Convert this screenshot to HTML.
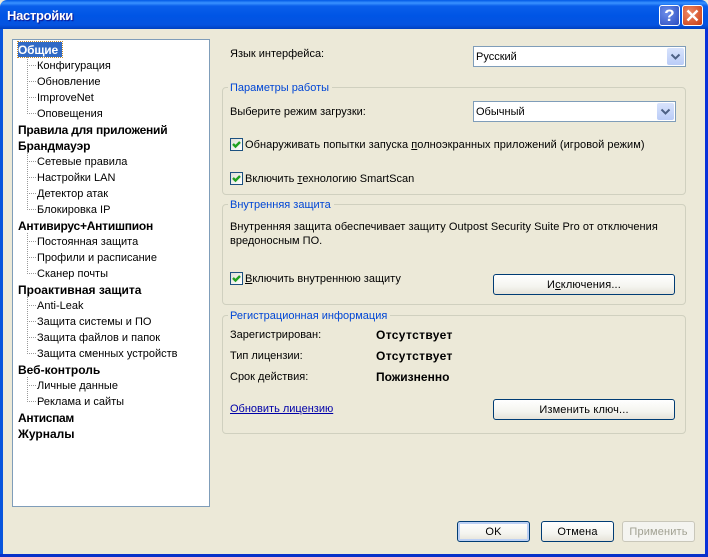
<!DOCTYPE html>
<html><head><meta charset="utf-8"><style>
html,body{margin:0;padding:0;width:708px;height:557px;overflow:hidden;background:#ECE9D8}
*{box-sizing:border-box}
body{position:relative;font:11px/13px "Liberation Sans",sans-serif;color:#000}
.a,.t,.b,.h,.v,.g,.s{position:absolute}
.t{white-space:nowrap;margin-top:1px}
.n{left:37px}
.m{left:18px;font-weight:bold;font-size:12px}
.k{left:376px;font-weight:bold;font-size:12px}
.h{height:1px;width:9px;left:27px;background-image:linear-gradient(90deg,#999 50%,transparent 50%);background-size:2px 1px}
.v{width:1px;left:27px;background-image:linear-gradient(#999 50%,transparent 50%);background-size:1px 2px}
.g{left:222px;width:464px;border:1px solid #D0D0BF;border-radius:4px}
.l{color:#0046D5;background:#ECE9D8;padding:0 3px 0 2px}
.b{height:21px;border:1px solid #003C74;border-radius:3px;background:linear-gradient(#fff,#f4f4ef 60%,#e6e3d8);text-align:center;line-height:20px;letter-spacing:.15px}
.s{height:21px;border:1px solid #7F9DB9;background:#fff;line-height:21px;padding-left:2px}
.s i{position:absolute;right:1px;top:1px;width:17px;height:17px;border-radius:2px;background:linear-gradient(#D8E3FC,#BACCF7)}
.c{position:absolute;width:13px;height:13px;border:1px solid #1C5180;background:linear-gradient(135deg,#E0E0D8,#fff)}
.d{letter-spacing:.05px}
u{text-decoration:underline}
</style></head><body>
<div class="a" style="left:0;top:0;width:708px;height:29px;background:linear-gradient(#0058E6 0,#3A93FF 3px,#0A5FEA 6px,#0055E5 16px,#0553E0 25px,#0040C0 29px);border-radius:7px 7px 0 0"></div>
<div class="a" style="left:0;top:29px;width:3px;height:528px;background:#0855DD"></div>
<div class="a" style="right:0;top:29px;width:3px;height:528px;background:#0831D9"></div>
<div class="a" style="left:0;top:554px;width:708px;height:3px;background:#0831C9"></div>
<div class="t" style="left:7px;top:8px;margin:0;color:#fff;font:bold 13px/16px 'Liberation Sans',sans-serif;letter-spacing:-.3px;text-shadow:1px 1px 1px #0F1089">Настройки</div>
<div class="a" style="left:659px;top:5px;width:21px;height:21px;border:1px solid #fff;border-radius:3px;background:radial-gradient(circle at 35% 35%,#6E8FEA,#2A4CC0);color:#fff;font:bold 17px/19px 'Liberation Sans',sans-serif;text-align:center">?</div>
<div class="a" style="left:682px;top:5px;width:21px;height:21px;border:1px solid #fff;border-radius:3px;background:radial-gradient(circle at 35% 35%,#EE8A66,#C93A10)"><svg width="19" height="19" style="display:block"><path d="M4.5 4.5L14.5 14.5M14.5 4.5L4.5 14.5" stroke="#fff" stroke-width="2.4"/></svg></div>

<div class="a" style="left:12px;top:39px;width:198px;height:468px;border:1px solid #7F9DB9;background:#fff"></div>
<div class="a" style="left:18px;top:42px;width:44px;height:15px;background:#316AC5;outline:1px dotted #C08A30"></div>
<div class="v" style="top:57px;height:56px"></div>
<div class="h" style="top:65px"></div><div class="h" style="top:81px"></div><div class="h" style="top:97px"></div><div class="h" style="top:113px"></div>
<div class="v" style="top:153px;height:56px"></div>
<div class="h" style="top:161px"></div><div class="h" style="top:177px"></div><div class="h" style="top:193px"></div><div class="h" style="top:209px"></div>
<div class="v" style="top:233px;height:40px"></div>
<div class="h" style="top:241px"></div><div class="h" style="top:257px"></div><div class="h" style="top:273px"></div>
<div class="v" style="top:297px;height:56px"></div>
<div class="h" style="top:305px"></div><div class="h" style="top:321px"></div><div class="h" style="top:337px"></div><div class="h" style="top:353px"></div>
<div class="v" style="top:377px;height:24px"></div>
<div class="h" style="top:385px"></div><div class="h" style="top:401px"></div>

<div class="t m" style="top:43px;color:#fff;letter-spacing:-.2px">Общие</div>
<div class="t n" style="top:59px">Конфигурация</div>
<div class="t n" style="top:75px">Обновление</div>
<div class="t n" style="top:91px">ImproveNet</div>
<div class="t n" style="top:107px">Оповещения</div>
<div class="t m" style="top:123px;letter-spacing:-.22px">Правила для приложений</div>
<div class="t m" style="top:139px;letter-spacing:-.1px">Брандмауэр</div>
<div class="t n" style="top:155px">Сетевые правила</div>
<div class="t n" style="top:171px">Настройки LAN</div>
<div class="t n" style="top:187px">Детектор атак</div>
<div class="t n" style="top:203px">Блокировка IP</div>
<div class="t m" style="top:219px;letter-spacing:-.24px">Антивирус+Антишпион</div>
<div class="t n" style="top:235px">Постоянная защита</div>
<div class="t n" style="top:251px">Профили и расписание</div>
<div class="t n" style="top:267px">Сканер почты</div>
<div class="t m" style="top:283px">Проактивная защита</div>
<div class="t n" style="top:299px">Anti-Leak</div>
<div class="t n" style="top:315px">Защита системы и ПО</div>
<div class="t n" style="top:331px">Защита файлов и папок</div>
<div class="t n" style="top:347px">Защита сменных устройств</div>
<div class="t m" style="top:363px">Веб-контроль</div>
<div class="t n" style="top:379px">Личные данные</div>
<div class="t n" style="top:395px">Реклама и сайты</div>
<div class="t m" style="top:411px;letter-spacing:-.35px">Антиспам</div>
<div class="t m" style="top:427px">Журналы</div>

<div class="t" style="left:230px;top:47px">Язык интерфейса:</div>
<div class="s" style="left:473px;top:46px;width:213px">Русский<i><svg width="17" height="17" style="display:block"><path d="M4.5 6.5L8.5 10.5L12.5 6.5" fill="none" stroke="#4D6185" stroke-width="2"/></svg></i></div>

<div class="g" style="top:87px;height:108px"></div>
<div class="t l" style="left:228px;top:81px">Параметры работы</div>
<div class="t" style="left:230px;top:105px">Выберите режим загрузки:</div>
<div class="s" style="left:473px;top:101px;width:203px">Обычный<i><svg width="17" height="17" style="display:block"><path d="M4.5 6.5L8.5 10.5L12.5 6.5" fill="none" stroke="#4D6185" stroke-width="2"/></svg></i></div>
<div class="c" style="left:230px;top:138px"><svg width="11" height="11" style="display:block"><path d="M2 5L4.5 7.5L9 3" fill="none" stroke="#21A121" stroke-width="2.4"/></svg></div>
<div class="t d" style="left:245px;top:138px">Обнаруживать попытки запуска <u>п</u>олноэкранных приложений (игровой режим)</div>
<div class="c" style="left:230px;top:172px"><svg width="11" height="11" style="display:block"><path d="M2 5L4.5 7.5L9 3" fill="none" stroke="#21A121" stroke-width="2.4"/></svg></div>
<div class="t" style="left:245px;top:172px">Включить <u>т</u>ехнологию SmartScan</div>

<div class="g" style="top:204px;height:101px"></div>
<div class="t l" style="left:228px;top:198px">Внутренняя защита</div>
<div class="t d" style="left:230px;top:220px">Внутренняя защита обеспечивает защиту Outpost Security Suite Pro от отключения</div>
<div class="t" style="left:230px;top:234px">вредоносным ПО.</div>
<div class="c" style="left:230px;top:272px"><svg width="11" height="11" style="display:block"><path d="M2 5L4.5 7.5L9 3" fill="none" stroke="#21A121" stroke-width="2.4"/></svg></div>
<div class="t" style="left:245px;top:272px"><u>В</u>ключить внутреннюю защиту</div>
<div class="b" style="left:493px;top:274px;width:182px">И<u>с</u>ключения...</div>

<div class="g" style="top:315px;height:119px"></div>
<div class="t l" style="left:228px;top:309px">Регистрационная информация</div>
<div class="t" style="left:230px;top:328px">Зарегистрирован:</div>
<div class="t k" style="top:328px;letter-spacing:.36px">Отсутствует</div>
<div class="t" style="left:230px;top:349px">Тип лицензии:</div>
<div class="t k" style="top:349px;letter-spacing:.36px">Отсутствует</div>
<div class="t" style="left:230px;top:370px">Срок действия:</div>
<div class="t k" style="top:370px">Пожизненно</div>
<div class="t" style="left:230px;top:402px;color:#0000A8"><u>Обновить лицензию</u></div>
<div class="b" style="left:493px;top:399px;width:182px">Изменить ключ...</div>

<div class="b" style="left:457px;top:521px;width:73px;box-shadow:inset 0 0 0 2px #BCD0F4">OK</div>
<div class="b" style="left:541px;top:521px;width:73px">Отмена</div>
<div class="b" style="left:622px;top:521px;width:73px;border-color:#C9C7BA;background:#F4F4F0;color:#A1A192">Применить</div>
</body></html>
